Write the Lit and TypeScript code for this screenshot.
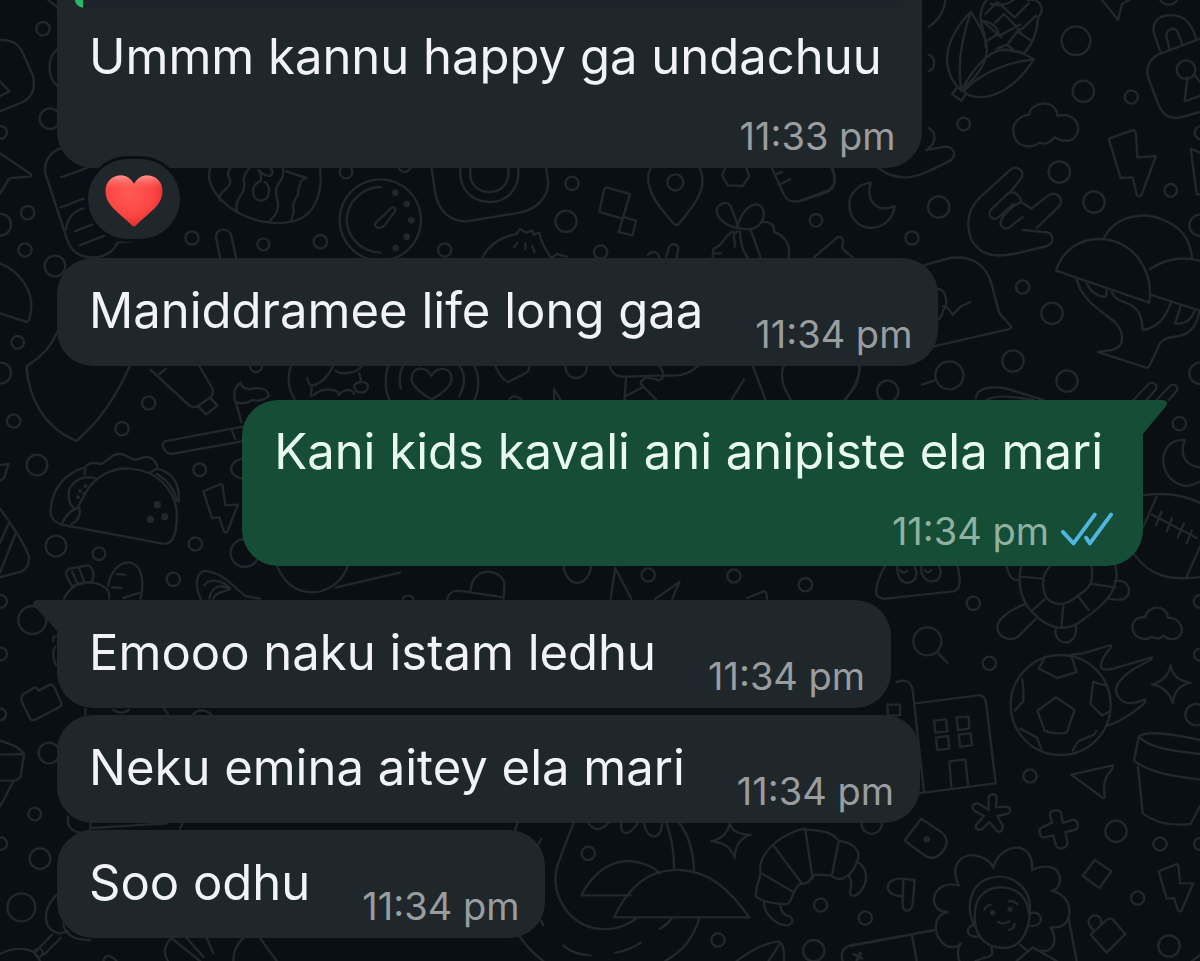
import { LitElement, html, svg, css, nothing } from "lit";
import { customElement, property } from "lit/decorators.js";
import { classMap } from "lit/directives/class-map.js";

interface Message {
  text: string;
  time: string;
  outgoing?: boolean;
  stacked?: boolean;
  tail?: boolean;
  quoted?: boolean;
  reaction?: boolean;
  apart?: boolean;
}

const MESSAGES: Message[] = [
  { text: "Ummm kannu happy ga undachuu", time: "11:33 pm", stacked: true, quoted: true, reaction: true },
  { text: "Maniddramee life long gaa", time: "11:34 pm" },
  { text: "Kani kids kavali ani anipiste ela mari", time: "11:34 pm", outgoing: true, stacked: true, tail: true, apart: true },
  { text: "Emooo naku istam ledhu", time: "11:34 pm", tail: true, apart: true },
  { text: "Neku emina aitey ela mari", time: "11:34 pm" },
  { text: "Soo odhu", time: "11:34 pm" },
];

/* One tile of the wallpaper: its origin, its drawing scale, outlines, rings and dots. */
interface Tile {
  at: [number, number];
  unit: [number, number];
  lines: string[];
  rings: number[][];
  dots?: number[][];
}

const TILES: Tile[] = [
  {
    at: [0, 0], unit: [3, 3],
    lines: [
      "M140 -4L172 22",
      "M0 120C40 118 58 135 70 162L98 226C108 262 98 290 68 306L0 334",
      "M0 244L28 274L0 288",
      "M172 148C140 172 142 232 172 258",
      "M0 460L92 522Q96 528 88 530L34 534Q24 536 18 552L0 580",
      "M186 444C150 454 130 486 136 520L200 715C214 758 246 776 290 772C322 768 344 750 352 728L396 724",
      "M184 532L270 500M182 622L250 596M198 690C200 656 222 632 250 626M224 694L276 674M238 736L316 706",
    ],
    rings: [[129, 86, 20], [150, 356, 31], [2, 397, 19], [83, 638, 20], [0, 674, 33], [75, 750, 20]],
  },
  {
    at: [800, 0], unit: [3, 3],
    lines: [
      "M436 0C432 34 414 62 386 80M386 164C408 172 408 206 386 214M386 384C410 396 408 430 386 444",
      "M512 36C468 78 436 140 442 190C446 228 462 252 484 272C524 236 566 190 560 140C556 104 536 70 512 36ZM512 36C490 100 470 190 484 272M484 272C514 214 560 156 604 150C640 146 672 160 702 178C670 226 620 280 560 290C530 294 504 288 490 274M702 178C620 186 540 220 490 274M470 264L456 282L484 302L498 282",
      "M560 0C540 24 536 52 548 86C554 110 560 124 556 140M600 150C636 150 660 156 672 160C700 130 712 96 714 52C734 36 728 -6 684 0M572 12Q620 20 640 0M546 62L604 112M562 122L596 100Q590 70 546 62M556 42L592 6L644 52L686 10M586 68L612 42L660 92L708 48M600 106L660 74M622 134L652 94L694 122M590 146L622 134L640 150",
      "M906 0L954 60L966 12L988 0",
      "M1082 158L1062 100C1054 62 1082 42 1122 46C1158 50 1176 74 1190 120M1108 146L1100 112C1096 88 1124 76 1134 98L1148 136M1200 116L1074 164C1046 180 1036 206 1046 236L1074 310C1086 344 1110 358 1142 352L1200 336M1162 232L1154 304L1200 288M1184 226L1200 246",
      "M688 344C688 306 770 292 772 348C838 330 852 406 812 420C792 426 776 420 764 412C750 430 732 434 718 428C694 448 644 442 640 396C636 368 660 348 688 344Z",
      "M926 416L1000 390Q1008 392 1008 402L1012 472L1068 468L1024 586Q1016 592 1010 584L998 532L962 534Z",
      "M1200 458L1172 446L1190 582L1200 584",
      "M378 450L436 440C468 442 468 470 450 482C400 508 350 534 310 532C278 530 254 520 236 504",
      "M94 502C112 544 104 566 82 576L0 604",
      "M212 548C176 552 146 580 148 618C150 662 184 684 214 684C252 682 280 656 284 618C236 640 196 608 212 548Z",
      "M628 580L664 534C676 510 648 494 630 510L540 592C492 636 494 714 540 750C568 772 608 768 640 762L742 738C768 724 758 694 730 696L668 690M710 684L776 620C798 596 764 566 740 590L694 626L664 606C656 574 630 570 616 588L574 628C558 648 582 666 598 650L640 612M664 606C640 614 598 650 602 676C616 694 634 682 640 672L668 652",
      "M912 714C944 650 1030 628 1100 664C1152 688 1172 728 1176 774M768 812C790 746 846 710 916 718C1000 728 1062 810 1048 908ZM1050 808C1090 778 1146 768 1200 782M1050 884L1200 932",
      "M830 838C846 900 900 930 944 966C974 996 976 1040 936 1050L894 1056L1036 1102Q1044 1106 1050 1094L1080 1030C1100 1004 1130 1016 1160 1000C1182 986 1194 960 1198 934M860 850Q880 892 918 890L920 868M936 876C948 912 992 900 1014 934C1030 958 1024 974 1028 990C1072 984 1098 950 1112 910M1142 916L1126 970C1154 974 1174 960 1184 932",
      "M42 772L112 712Q128 708 130 724Q122 744 134 752L158 772",
      "M370 796L450 774C520 764 560 800 574 850L598 940L632 978Q636 986 624 988L398 1040M408 866C440 866 446 910 430 930C426 950 416 960 406 964M430 918L442 922L458 944L482 920L512 906",
      "M366 1154L408 1140M528 1194C530 1160 580 1158 620 1166L730 1200M560 1200Q590 1180 700 1200M1000 1200L1046 1152C1060 1140 1078 1160 1064 1172L1040 1200M1070 1200L1110 1158C1124 1146 1140 1162 1126 1178L1106 1200",
      "M180 1098Q176 1150 136 1200",
    ],
    rings: [[828, 122, 43], [850, 274, 32], [994, 291, 20], [491, 372, 19], [778, 516, 32], [1112, 571, 19], [882, 606, 32], [416, 621, 32], [48, 661, 19], [336, 714, 20], [668, 861, 20], [756, 940, 32], [639, 1083, 32], [801, 1143, 32], [448, 1126, 42], [263, 1174, 32], [1158, 209, 28], [1204, 398, 20], [1200, 676, 32], [1200, 1120, 32], [1106, -16, 30]],
  },
  {
    at: [400, 150], unit: [3, 3],
    lines: [
      "M94 50L106 130C116 184 150 214 200 214L360 188C414 176 446 138 444 96L438 50M182 50C174 110 210 156 268 156C330 156 362 106 354 50M212 50C204 94 226 126 268 126C312 126 332 90 324 50",
      "M618 112Q614 114 612 120L598 186L668 206L690 132ZM668 206L674 202L708 212L698 256L656 246Z",
      "M756 50C742 66 742 94 750 116C764 160 800 196 822 222Q828 228 836 222C866 186 896 150 906 110C910 82 906 64 896 50",
      "M976 54L966 76L984 106L1028 108L1048 78L1038 52",
      "M1114 50L1152 134C1162 154 1180 158 1200 152L1284 122C1308 108 1308 80 1296 50M1128 72L1146 66M1138 104L1170 88",
      "M248 322C266 286 298 262 350 252L360 236L378 248L396 242L402 254L418 248C420 272 436 298 452 322M352 278L342 292M376 280V298M396 288L404 306M458 322L470 312L500 320",
      "M744 316C750 302 774 302 778 322M798 320L808 290C818 276 838 284 834 300L830 322",
      "M1010 234C970 226 936 190 956 168C976 150 992 160 996 180C1002 200 1014 214 1012 234C1020 190 1050 160 1072 164C1100 172 1094 210 1076 226C1056 244 1030 236 1012 234M1000 244C970 256 970 290 940 296L938 322M1012 244C990 256 1010 276 1004 290M1020 244C1022 280 1030 310 1044 322M1052 240L1082 322M1090 216C1110 214 1126 226 1122 246C1160 260 1172 290 1166 322M942 310H964",
    ],
    rings: [[516, 100, 20], [498, 214, 32], [134, 300, 20], [602, 306, 20], [826, 97, 24], [14, 48, 18]],
  },
  {
    at: [190, 150], unit: [3, 3],
    lines: [
      "M62 50C44 98 78 146 140 186C196 216 256 226 310 214C370 198 400 140 390 50M124 50Q108 68 118 84T104 120T92 152M182 50Q158 74 162 96T150 140T142 186M278 50Q284 80 268 98T262 150T240 212M288 64L350 84L336 90Q324 110 324 136Q304 160 312 184L304 210M206 60Q220 78 240 78Q256 66 240 54M208 96Q220 84 206 62M206 96C180 110 186 150 212 152C242 150 244 108 224 96",
      "M90 322L78 262C76 232 118 232 124 258L138 322",
      "M574 112C520 108 470 158 470 210C472 264 516 306 572 308",
      "M560 216L606 172Q618 172 616 182L584 226C566 242 546 228 560 216Z",
    ],
    rings: [[571, 210, 122], [6, 264, 20], [220, 283, 18], [391, 275, 20], [468, 66, 19]],
    dots: [[616, 128, 10], [650, 162, 10], [664, 211, 10], [650, 260, 10], [617, 294, 10]],
  },
  {
    at: [0, 200], unit: [3, 3],
    lines: [
      "M0 190C60 214 96 270 94 322Q90 366 80 366L0 340",
      "M172 396C154 438 126 470 86 494Q78 500 80 512L84 540",
    ],
    rings: [[165, 198, 31], [53, 427, 19], [2, 519, 31]],
  },
  {
    at: [0, 350], unit: [3, 3],
    lines: [
      "M80 48C86 150 134 230 222 270Q230 276 238 264C306 206 350 136 388 50",
      "M452 60L570 168Q580 172 590 170L632 142C642 132 640 120 634 110L598 48M478 72L498 56M630 142L652 166L618 194L596 170",
      "M722 98C706 110 698 130 706 156C728 164 746 158 758 150C780 156 800 146 808 136C800 116 780 112 760 116C740 120 724 114 722 98M708 158L724 216M760 224L494 274C482 284 492 308 514 312L738 272M694 238L706 268",
      "M152 480C154 420 194 368 256 352C262 340 280 336 304 342C316 336 326 326 332 322C350 304 374 312 398 328C414 332 430 318 446 322C464 326 472 342 472 356C520 368 540 400 536 456M256 352L254 372M472 356L452 366M184 524C160 516 150 500 152 480M250 442C280 376 340 352 390 356C470 362 520 414 530 480C532 520 526 556 516 570Q506 584 484 580L184 524C196 498 210 480 232 474C240 460 244 450 250 442M290 386C240 370 204 404 206 436C206 456 214 470 224 476M470 372Q520 400 530 452M214 522Q244 508 238 476",
      "M610 424L662 402Q670 404 668 412L676 466L714 464L682 544Q676 552 670 540L658 502L636 504Z",
      "M0 476C32 520 70 574 86 616C90 640 82 654 66 664L0 682M26 520L0 578M46 552L0 668M0 346L26 342L12 384L0 392",
      "M216 708L200 680C196 666 200 658 210 656L262 646C276 648 282 664 280 680L276 694M216 708L276 694M216 664L232 700M238 656L252 694M192 746C214 702 250 690 290 700C318 710 330 722 328 746M324 708C330 670 356 634 390 638C430 646 432 700 422 746M350 672L376 674M336 712L364 714M370 744L420 728",
      "M602 746C580 700 592 656 624 664C670 672 696 704 736 738L780 746M628 746C634 712 660 698 690 718C670 724 644 730 640 746M612 706C626 684 666 690 690 714",
      "M832 650C856 708 904 736 962 724C1010 710 1034 676 1042 650M1008 712L1200 668",
      "M732 326C680 330 682 384 732 386",
      "M872 50C862 80 864 120 884 146M922 84Q924 104 936 106C960 104 984 80 998 50M936 106L932 138M1006 62C1030 78 1070 66 1084 50M1078 70L1084 96M940 136C966 110 1020 116 1016 136M1016 136C1030 114 1060 118 1062 132M1062 106C1076 90 1106 94 1104 112C1100 132 1066 136 1062 106",
    ],
    rings: [[446, 159, 20], [41, 213, 20], [366, 236, 20], [111, 345, 31], [599, 359, 19], [168, 588, 31], [297, 611, 19], [586, 582, 20], [520, 688, 20], [734, 609, 42], [768, 48, 18], [2, 754, 19], [97, 810, 42]],
    dots: [[472, 464, 11], [494, 500, 11], [451, 508, 11], [256, 408, 6], [240, 422, 6], [234, 442, 6], [252, 430, 5]],
  },
  {
    at: [300, 340], unit: [2.613, 3],
    lines: [
      "M232 78C222 100 220 150 234 178M268 80C260 100 258 128 264 146M418 80C434 104 430 140 416 168M456 78C470 110 468 150 456 178M344 108C330 74 288 80 292 120C296 146 326 166 344 178C366 164 394 144 396 118C398 78 354 78 344 108Z",
      "M510 78Q526 118 544 126L592 98Q600 90 598 78M694 78C692 126 750 126 750 78M810 80C818 106 830 110 850 110L960 106C1000 110 1020 98 1040 78M940 78Q952 100 948 112Q940 126 930 118L906 112Q890 120 890 132L930 178M852 112L848 178M852 168L898 140M548 176Q562 160 578 178M664 178V148L680 178",
      "M1128 178L1160 118M1184 80L1216 178M1264 78C1252 110 1266 150 1282 178M1462 78C1462 130 1446 150 1424 178",
    ],
    rings: [],
  },
  {
    at: [200, 560], unit: [2.24, 3],
    lines: [
      "M606 96C606 20 672 20 682 70L680 116M554 116C560 92 572 90 590 94L680 112M814 16C820 88 872 84 876 16M920 116L930 24L966 116M1020 116L1074 66L1058 116M1226 114L1262 94Q1270 92 1270 116M454 116C458 104 474 104 478 116",
      "M989 45A15 20 0 1 0 1019 45A15 20 0 1 0 989 45M1181 48A15 20 0 1 0 1211 48A15 20 0 1 0 1181 48M1341 74A15 20 0 1 0 1371 74A15 20 0 1 0 1341 74",
    ],
    rings: [],
  },
  {
    at: [850, 380], unit: [3, 3],
    lines: [
      "M1004 180C960 176 936 212 940 250C948 300 990 322 1020 316C1040 312 1050 306 1060 296M1004 180C986 230 1010 262 1060 262",
      "M880 346C950 336 1010 346 1060 374M850 520C900 590 960 604 1060 590M920 350L880 440M1050 500L1010 590M906 404L1040 474M934 396L918 436M966 414L950 454M1002 430L984 472M1026 450L1010 490",
      "M106 556C92 580 80 610 78 636C80 652 92 658 108 656L310 634C334 628 332 600 322 556M142 560C140 596 160 610 174 608C196 606 206 584 194 560M214 560C210 590 232 606 248 604C272 602 276 580 268 560M150 570Q160 584 172 572M224 570Q234 584 244 570",
      "M514 558C500 610 514 660 544 694C590 744 640 756 684 730C740 690 780 660 792 620C804 590 800 576 796 558M600 558C570 590 576 640 596 660C630 684 660 668 684 646C724 624 732 600 724 556M512 590L576 596M544 694L584 658M640 678L634 742M684 648L716 690M726 612L796 622M470 556C474 590 490 602 510 600M796 602C830 600 840 620 836 640C830 660 810 662 776 656M526 672C476 690 440 720 442 744C446 776 484 784 504 770L556 718M618 742C610 780 640 794 660 784C674 776 680 756 678 736",
      "M264 820L292 848",
      "M886 712C890 676 950 670 954 714C990 710 1010 756 982 774C962 782 950 776 940 766C930 780 916 776 906 770C892 782 854 780 848 748C844 722 862 710 886 712Z",
    ],
    rings: [[988, 131, 20], [370, 670, 20], [232, 784, 42], [1050, 664, 19]],
  },
  {
    at: [850, 640], unit: [3, 3],
    lines: [
      "M140 126Q180 112 188 150L222 456M204 460L436 430Q438 428 436 420L408 186Q402 164 384 166L196 190M112 194H150V226H114Z",
      "M252 242L288 238L292 274L256 278ZM320 232L356 230L358 266L324 270ZM258 292L294 288L298 326L262 330ZM326 284L362 280L366 316L330 320ZM304 440L298 364L346 358L354 434",
      "M584 54L566 86L622 114L680 96L666 54M618 172L562 212L584 272Q610 284 650 278L674 210ZM516 118C522 140 520 170 520 184L494 212M766 136L730 126Q724 160 722 192L756 226L776 216M510 266L560 292L574 326M668 332L684 304L732 284L740 272",
      "M660 44C710 46 750 20 784 16Q784 24 770 38C740 80 750 96 790 86L906 52Q906 60 890 66C820 100 780 140 806 172C826 200 860 188 886 178Q888 190 868 202C840 226 800 250 772 256",
      "M962 76Q968 120 1022 128Q974 138 968 190Q956 142 906 134Q954 120 962 76Z",
      "M866 290C890 270 980 284 1050 300M866 290C900 326 980 334 1050 342M866 290L852 362C900 400 980 412 1050 418M864 380L878 520C920 552 970 558 1022 552L1050 498",
      "M664 404L788 376Q792 380 780 396Q756 420 764 472Q758 478 748 466Z",
      "M416 510L416 474C416 458 440 458 440 476L438 502L466 500C486 500 484 522 468 522L442 528L458 556C460 578 446 578 438 570L418 546L398 566C384 574 370 564 382 550L402 528L376 514C358 504 370 486 388 492Z",
      "M606 548L600 524C598 508 632 506 634 522L638 548L668 540C684 538 690 564 674 570L646 576L652 604C656 626 624 632 618 616L610 586L584 592C570 594 562 568 576 562Z",
      "M214 536L166 598Q164 604 172 608L230 650C260 664 290 630 290 604C288 588 280 580 270 574Z",
      "M156 716L194 720L188 790C186 818 156 820 158 792L160 720M160 768C96 770 100 712 156 716",
      "M734 660L784 694L748 744L698 708ZM926 694L980 672Q986 674 986 684L990 730L1030 730L994 812Q986 818 982 806L972 774L950 776ZM722 884L774 836L786 836L826 882L770 938ZM732 872C722 864 714 856 716 842C722 814 764 826 752 856",
      "M326 736C296 670 340 636 382 648C410 654 426 670 430 684C440 640 480 618 512 624C544 636 548 666 546 690C590 670 630 680 630 720C628 742 620 750 604 752C650 762 664 800 656 830C650 856 630 864 602 862C624 900 612 940 570 932M326 736C280 724 250 752 252 784C256 808 270 816 294 816C250 824 250 876 272 902C290 926 320 926 332 910Q318 934 328 963",
      "M376 860C350 820 350 740 414 716C480 694 542 740 540 806C540 870 516 924 458 924C408 922 380 890 376 850C366 780 400 740 458 742C510 746 534 780 536 820M376 852C340 860 350 900 390 888M540 820C570 812 584 840 562 854C552 860 540 858 534 854M404 808Q408 796 422 794M476 784Q490 780 502 792M444 846Q462 856 478 844M494 852Q494 864 478 870M424 924Q436 950 400 954L376 963M510 914L534 934M500 963L548 922L620 963M656 836L680 963",
      "M0 918L254 870M186 886L200 963M14 944L36 956M32 940L20 963M34 550C36 592 94 592 96 550",
      "M1026 963L1050 946",
    ],
    rings: [[418, 70, 20], [540, 408, 20], [798, 574, 32], [930, 612, 20], [863, 774, 20], [957, 918, 32], [46, 834, 20], [632, 195, 150], [1038, 224, 32], [1050, 44, 18], [1050, 612, 18]],
    dots: [[230, 598, 10], [428, 818, 8], [480, 808, 8]],
  },
  {
    at: [500, 800], unit: [3, 3],
    lines: [
      "M220 70L172 196C150 280 200 364 280 384C330 394 376 380 408 356M244 286C280 214 340 176 400 184C440 190 462 202 480 220M244 286H392M342 352C390 250 460 206 540 210C630 214 690 270 748 352ZM500 70Q524 140 522 210M538 70C570 110 580 160 582 212M266 70Q290 104 324 70M364 70Q360 104 384 98Q400 90 412 70M432 70C440 120 484 124 486 70",
      "M690 70Q696 104 752 104Q706 118 704 174Q690 128 634 124Q680 114 690 70M52 70L44 96M124 116L112 138M120 356L130 376M58 408C80 440 100 462 130 483M190 436Q220 464 272 466M346 458Q386 452 422 428M480 386Q504 372 516 354M598 356C576 420 550 450 496 483",
      "M916 86C860 96 790 140 780 200C790 230 764 250 768 290C784 304 830 314 862 312C880 300 872 282 896 254L916 250C930 250 930 230 944 224L994 226C1008 240 1030 240 1040 228C1056 222 1080 180 1074 156C1060 130 1036 126 1016 122C990 90 950 92 916 88L938 236M820 136L904 248M784 220L880 276M1016 124L996 224M1070 184C1100 200 1110 240 1080 276C1066 292 1048 292 1050 272C1056 256 1054 240 1046 226M792 304C790 344 830 376 862 376C880 372 880 362 872 350Q842 346 842 316",
      "M1200 410L1050 436C1026 446 1022 460 1028 483M710 483Q780 430 836 424Q854 430 852 483M840 430L806 483M1060 462L1086 474M1080 458L1070 483",
    ],
    rings: [[265, 160, 20], [654, 420, 20], [962, 315, 20], [941, 452, 32]],
  },
  {
    at: [0, 600], unit: [3, 3],
    lines: [
      "M68 284L104 262Q112 262 116 272L150 254Q160 254 164 264L184 308Q186 318 176 322L104 360Q92 362 88 352L64 302Q64 292 68 284Z",
      "M0 422Q60 440 72 462L62 530Q56 540 40 542L0 542M0 464L72 462M40 544L0 620",
      "M204 650C198 690 236 710 270 690L272 664M276 684L500 670M548 670L540 686M172 110L160 110V124M166 140Q152 160 168 196",
      "M168 886C126 930 126 990 180 1000L204 994M190 970Q196 1020 270 1020M156 1004L104 1058M182 1014L132 1064M0 1062C40 1040 84 1044 104 1058L120 1083M310 1083Q318 1052 350 1083M514 1014C490 1040 490 1060 504 1083M514 1014L600 1083M560 1014L610 1070M620 1014L640 1060M700 1083Q700 1040 730 1014M780 1014L830 1083",
      "M340 330Q364 346 386 330M492 326L504 342M580 342Q604 320 632 342M256 326V344",
    ],
    rings: [[2, 162, 19], [0, 343, 18], [147, 459, 31], [104, 642, 19], [2, 731, 19], [120, 776, 31], [64, 922, 42], [116, 1058, 12]],
  },
];

@customElement("chat-wallpaper")
class ChatWallpaper extends LitElement {
  static styles = css`
    :host { display: block; }
    svg { display: block; width: 100%; height: 100%; }
    .line { fill: none; stroke: #21272a; stroke-width: 2.4px; stroke-linecap: round; stroke-linejoin: round; }
    .line * { vector-effect: non-scaling-stroke; }
    .dot { fill: #21272a; stroke: none; }
  `;

  render() {
    return html`<svg viewBox="0 0 1200 961" preserveAspectRatio="xMidYMin slice" aria-hidden="true">
      ${TILES.map(
        (t) => svg`<g class="line" transform="translate(${t.at.join(" ")}) scale(${1 / t.unit[0]} ${1 / t.unit[1]})">
          ${t.lines.map((d) => svg`<path d=${d}></path>`)}
          ${t.rings.map(([x, y, r]) => svg`<circle cx=${x} cy=${y} r=${r}></circle>`)}
          ${(t.dots ?? []).map(([x, y, r]) => svg`<circle class="dot" cx=${x} cy=${y} r=${r}></circle>`)}
        </g>`
      )}
    </svg>`;
  }
}

@customElement("chat-message")
class ChatMessage extends LitElement {
  @property({ attribute: false }) message!: Message;

  static styles = css`
    :host { display: flex; }
    .bubble {
      position: relative;
      display: flex;
      column-gap: 52px;
      padding: 23px 26px 9px 32px;
      border-radius: 36px;
      background: #20272a;
      color: #f1f3f8;
    }
    .text { margin: 0 0 16px; font-size: 49px; line-height: 60px; font-weight: 400; }
    .meta {
      display: flex;
      align-items: center;
      align-self: flex-end;
      gap: 12px;
      font-size: 38px;
      line-height: 46px;
      color: #999da0;
      white-space: nowrap;
    }
    .stacked { flex-direction: column; row-gap: 10px; padding-top: 22px; padding-bottom: 12px; }
    .stacked .text { margin-right: 14px; }
    .outgoing { margin-left: auto; background: #154d37; color: #e9fbf1; }
    .outgoing .meta { color: #90b1a1; }
    .tailed { border-top-left-radius: 0; }
    .outgoing.tailed { border-radius: 36px 0 36px 36px; }
    .tail { position: absolute; top: 0; right: 100%; width: 24px; height: 34px; fill: #20272a; }
    .outgoing .tail { right: auto; left: 100%; fill: #154d37; }
    .quoted { padding-top: 0; padding-bottom: 9px; border-radius: 0 0 36px 36px; }
    .quote {
      height: 9px;
      margin: 0 -10px 18px -14px;
      border-radius: 0 0 14px 14px / 0 0 9px 9px;
      background: linear-gradient(90deg, #25b865 8px, #1c232b 8px);
    }
    .ticks {
      display: block;
      width: 52px;
      height: 34px;
      padding-bottom: 4px;
      margin-right: 4px;
      fill: none;
      stroke: #50b6e0;
      stroke-width: 4px;
      stroke-linecap: round;
      stroke-linejoin: round;
    }
    .reaction {
      position: absolute;
      left: 28px;
      bottom: -74px;
      display: grid;
      place-items: center;
      width: 98px;
      height: 86px;
      padding: 4px 0 0;
      border: 3px solid #0a0f13;
      border-radius: 43px;
      background: #20272a;
    }
    .heart { display: block; width: 58px; height: 52px; }
  `;

  private heart() {
    return html`<button class="reaction" type="button" aria-label="Heart reaction">
      <svg class="heart" viewBox="0 0 58 52" aria-hidden="true">
        <defs>
          <radialGradient id="glow" cx="0.42" cy="0.36" r="0.72">
            <stop offset="0" stop-color="#ff5a54"></stop>
            <stop offset="0.6" stop-color="#fb4543"></stop>
            <stop offset="1" stop-color="#dd2426"></stop>
          </radialGradient>
          <linearGradient id="shine" x1="0" y1="0" x2="0" y2="1">
            <stop offset="0" stop-color="#ffb0a8" stop-opacity="0.75"></stop>
            <stop offset="0.28" stop-color="#ff6a62" stop-opacity="0"></stop>
          </linearGradient>
        </defs>
        <path fill="url(#glow)" d="M29 9C26 3 21 0.500 15.500 0.500C7 0.500 0.500 7 0.500 16C0.500 31 15 38 27 50.500Q29 52.500 31 50.500C43 38 57.500 31 57.500 16C57.500 7 51 0.500 42.500 0.500C37 0.500 32 3 29 9Z"></path>
        <path fill="url(#shine)" d="M29 9C26 3 21 0.500 15.500 0.500C7 0.500 0.500 7 0.500 16C0.500 31 15 38 27 50.500Q29 52.500 31 50.500C43 38 57.500 31 57.500 16C57.500 7 51 0.500 42.500 0.500C37 0.500 32 3 29 9Z"></path>
      </svg>
    </button>`;
  }

  render() {
    const m = this.message;
    const tail = m.outgoing ? "M0 0H20Q26 1 23 6L0 34Z" : "M24 0H4Q-2 1 1 6L24 31Z";
    return html`<article
      class=${classMap({ bubble: true, stacked: !!m.stacked, outgoing: !!m.outgoing, tailed: !!m.tail, quoted: !!m.quoted })}
    >
      ${m.tail ? html`<svg class="tail" viewBox="0 0 24 34" aria-hidden="true"><path d=${tail}></path></svg>` : nothing}
      <div>
        ${m.quoted ? html`<div class="quote"></div>` : nothing}
        <p class="text">${m.text}</p>
      </div>
      <div class="meta">
        <time>${m.time}</time>
        ${m.outgoing
          ? html`<svg class="ticks" viewBox="0 0 54 34" role="img" aria-label="Read">
              <path d="M2 20L13 32L35 2M26 26L30 32L52 2"></path>
            </svg>`
          : nothing}
      </div>
      ${m.reaction ? this.heart() : nothing}
    </article>`;
  }
}

@customElement("app-root")
class AppRoot extends LitElement {
  static styles = css`
    :host {
      display: block;
      position: relative;
      min-height: 100vh;
      overflow: hidden;
      background: #0a0f13;
      font-family: Inter, Roboto, "Liberation Sans", sans-serif;
    }
    .wallpaper { position: absolute; inset: 0; }
    .log { position: relative; display: flex; flex-direction: column; gap: 7px; padding: 0 57px 20px; }
    .apart { margin-top: 27px; }
    .reacted { margin-bottom: 83px; }
  `;

  render() {
    return html`
      <chat-wallpaper class="wallpaper"></chat-wallpaper>
      <main class="log">
        ${MESSAGES.map(
          (m) => html`<chat-message class=${classMap({ apart: !!m.apart, reacted: !!m.reaction })} .message=${m}></chat-message>`
        )}
      </main>
    `;
  }
}
